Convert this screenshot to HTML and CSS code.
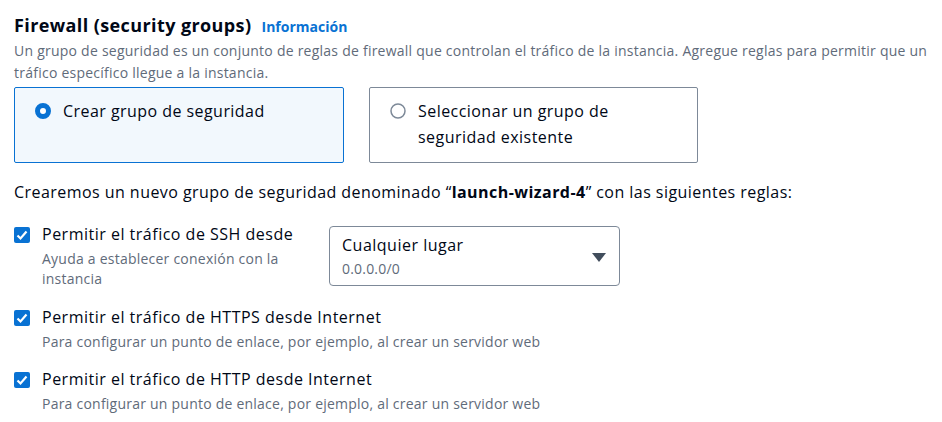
FILE: index.html
```html
<!DOCTYPE html>
<html lang="es">
<head>
<meta charset="utf-8">
<link rel="stylesheet" href="styles.css">
</head>
<body>
<section class="page">
  <h2 class="title">Firewall (security groups) <a class="info" href="#">Información</a></h2>
  <p class="desc">Un grupo de seguridad es un conjunto de reglas de firewall que controlan el tráfico de la instancia. Agregue reglas para permitir que un tráfico específico llegue a la instancia.</p>

  <div class="tiles">
    <div class="tile selected">
      <svg class="radio" width="16" height="16" viewBox="0 0 16 16"><circle cx="8" cy="8" r="5.5" fill="#fff" stroke="#0972d3" stroke-width="5"/></svg>
      <span class="tile-label">Crear grupo de seguridad</span>
    </div>
    <div class="tile">
      <svg class="radio" width="16" height="16" viewBox="0 0 16 16"><circle cx="8" cy="8" r="7" fill="#fff" stroke="#7d8998" stroke-width="1.5"/></svg>
      <span class="tile-label">Seleccionar un grupo de seguridad existente</span>
    </div>
  </div>

  <p class="note">Crearemos un nuevo grupo de seguridad denominado “<b>launch-wizard-4</b>” con las siguientes reglas:</p>

  <div class="rule rule-ssh">
    <div class="check-col">
      <svg class="check" width="16" height="16" viewBox="0 0 16 16"><rect x="0" y="0" width="16" height="16" rx="2" fill="#0972d3"/><path d="M3.5 8.5 L6.5 11.5 L12.5 4.5" fill="none" stroke="#fff" stroke-width="2.2"/></svg>
      <div class="rule-text">
        <div class="rule-label">Permitir el tráfico de SSH desde</div>
        <div class="rule-desc">Ayuda a establecer conexión con la instancia</div>
      </div>
    </div>
    <div class="select">
      <div class="select-text">
        <div class="select-value">Cualquier lugar</div>
        <div class="select-sub">0.0.0.0/0</div>
      </div>
      <svg class="caret" width="14" height="9" viewBox="0 0 14 9"><path d="M0 0 H14 L7 9 Z" fill="#414d5c"/></svg>
    </div>
  </div>

  <div class="rule">
    <div class="check-col">
      <svg class="check" width="16" height="16" viewBox="0 0 16 16"><rect x="0" y="0" width="16" height="16" rx="2" fill="#0972d3"/><path d="M3.5 8.5 L6.5 11.5 L12.5 4.5" fill="none" stroke="#fff" stroke-width="2.2"/></svg>
      <div class="rule-text">
        <div class="rule-label">Permitir el tráfico de HTTPS desde Internet</div>
        <div class="rule-desc">Para configurar un punto de enlace, por ejemplo, al crear un servidor web</div>
      </div>
    </div>
  </div>

  <div class="rule rule-last">
    <div class="check-col">
      <svg class="check" width="16" height="16" viewBox="0 0 16 16"><rect x="0" y="0" width="16" height="16" rx="2" fill="#0972d3"/><path d="M3.5 8.5 L6.5 11.5 L12.5 4.5" fill="none" stroke="#fff" stroke-width="2.2"/></svg>
      <div class="rule-text">
        <div class="rule-label">Permitir el tráfico de HTTP desde Internet</div>
        <div class="rule-desc">Para configurar un punto de enlace, por ejemplo, al crear un servidor web</div>
      </div>
    </div>
  </div>
</section>
</body>
</html>
```

FILE: styles.css
```css
* { box-sizing: border-box; }
html, body { margin: 0; background: #fff; }
body {
  font-family: "Open Sans", "Noto Sans", sans-serif;
  color: #000716;
}
.page {
  padding: 13px 14px 0 14px;
}
.title {
  margin: 0;
  font-size: 18px;
  line-height: 24px;
  font-weight: 700;
  letter-spacing: 0.4px;
  color: #000716;
}
.info {
  font-size: 14px;
  line-height: 1;
  font-weight: 700;
  letter-spacing: 0;
  color: #0972d3;
  text-decoration: none;
  margin-left: 5px;
}
.desc {
  margin: 3px 0 0 0;
  font-size: 14px;
  line-height: 22px;
  letter-spacing: 0.24px;
  color: #5f6b7a;
}
.tiles {
  display: flex;
  gap: 25px;
  margin-top: 3px;
}
.tile {
  width: 330px;
  height: 76px;
  border: 1px solid #7d8998;
  border-radius: 2px;
  padding: 10px 20px 12px 20px;
  display: flex;
  align-items: flex-start;
  gap: 12px;
  background: #fff;
}
.tile + .tile { width: 329px; }
.tile.selected {
  border-color: #0972d3;
  background: #f2f8fd;
}
.radio {
  flex: none;
  margin-top: 5px;
}
.tile-label {
  font-size: 16px;
  line-height: 26px;
  letter-spacing: 0.45px;
  color: #000716;
}
.note {
  margin: 18px 0 0 0;
  font-size: 16px;
  line-height: 22px;
  letter-spacing: 0.45px;
  color: #000716;
}
.note b { font-weight: 700; }
.rule {
  display: flex;
  align-items: flex-start;
  gap: 15px;
  margin-top: 17px;
}
.rule-ssh { margin-top: 20px; }
.rule-last { margin-top: 16px; }
.check-col {
  display: flex;
  align-items: flex-start;
  gap: 12px;
}
.rule-ssh .check-col { width: 300px; }
.check {
  flex: none;
  margin-top: 4px;
}
.rule-label {
  font-size: 16px;
  line-height: 22px;
  letter-spacing: 0.5px;
  color: #000716;
}
.rule-desc {
  margin-top: 4px;
  font-size: 14px;
  line-height: 20px;
  letter-spacing: 0.23px;
  color: #5f6b7a;
}
.select {
  margin-top: 3px;
  width: 291px;
  height: 60px;
  border: 1px solid #7d8998;
  border-radius: 4px;
  padding: 6px 13px 0 12px;
  display: flex;
  align-items: center;
  justify-content: space-between;
}
.select-text { align-self: flex-start; }
.select-value {
  font-size: 16px;
  line-height: 25px;
  letter-spacing: 0.5px;
  color: #000716;
}
.select-sub {
  font-size: 14px;
  line-height: 22px;
  letter-spacing: 0.2px;
  color: #5f6b7a;
}
.caret { flex: none; margin-top: -3px; }
```
